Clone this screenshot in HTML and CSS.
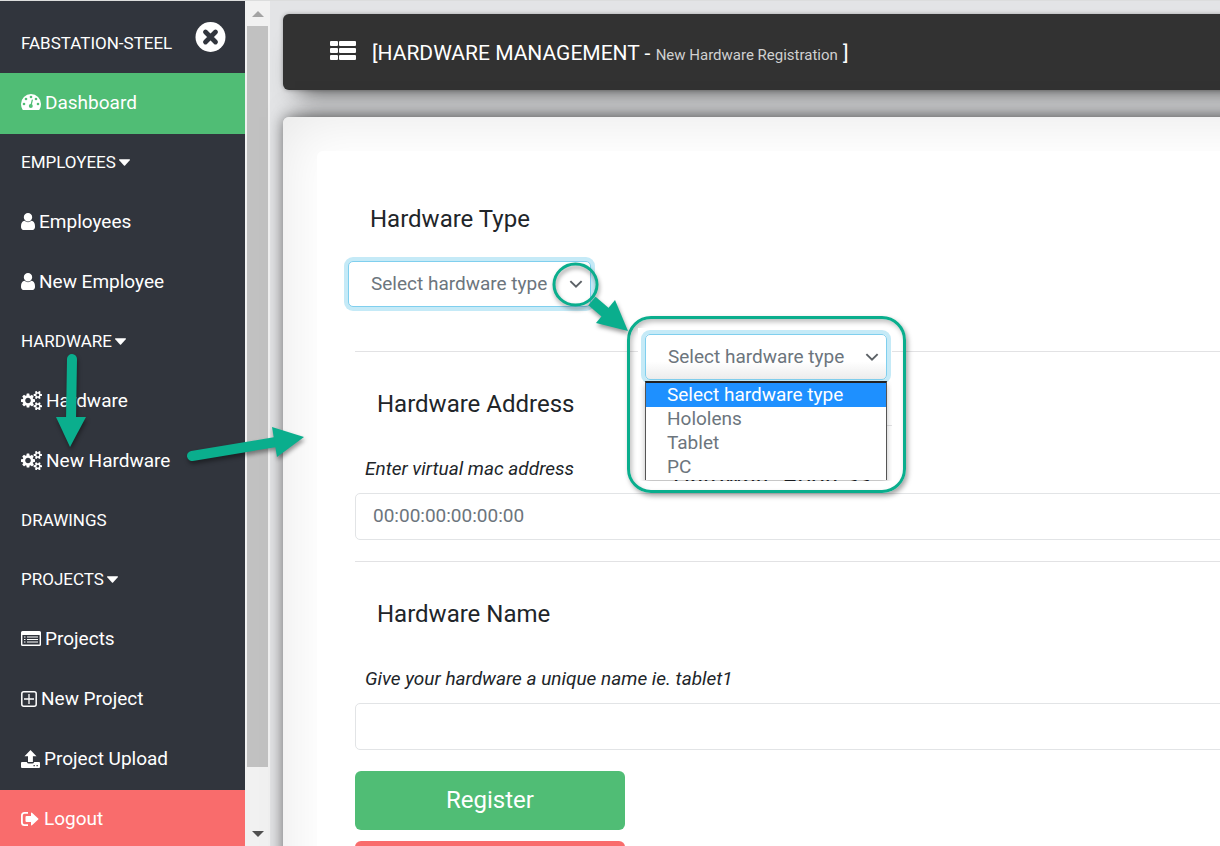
FILE: index.html
```html
<!DOCTYPE html>
<html lang="en">
<head>
  <meta charset="UTF-8">
  <title>Hardware Management</title>
  <link rel="stylesheet" href="styles.css">
</head>
<body>
  <svg class="sprite" width="0" height="0" aria-hidden="true">
    <symbol id="user" viewBox="256 128 1280 1536"><path d="M1536 1399q0 109-62.5 187t-150.5 78h-854q-88 0-150.5-78t-62.5-187q0-85 8.5-160.5t31.5-152 58.500-131 94-89 134.500-34.500q131 128 313 128t313-128q76 0 134.500 34.500t94 89 58.500 131 31.500 152 8.500 160.500zm-256-887q0 159-112.500 271.500t-271.500 112.500-271.500-112.500-112.500-271.500 112.500-271.500 271.500-112.500 271.500 112.500 112.500 271.500z"/></symbol>
    <symbol id="cogs" viewBox="0 40 1920 1700"><path d="M896 896q0-106-75-181t-181-75-181 75-75 181 75 181 181 75 181-75 75-181zm768 512q0-52-38-90t-90-38-90 38-38 90q0 53 37.500 90.500t90.500 37.500 90.500-37.500 37.500-90.500zm0-1024q0-52-38-90t-90-38-90 38-38 90q0 53 37.500 90.500t90.500 37.500 90.500-37.500 37.500-90.500zm-384 421v185q0 10-7 19.500t-16 10.500l-155 24q-11 35-32 76 34 48 90 115 7 11 7 20 0 12-7 19-23 30-82.500 89.500t-78.500 59.500q-11 0-21-7l-115-90q-37 19-77 31-11 108-23 155-7 24-30 24h-186q-11 0-20-7.500t-10-17.500l-23-153q-34-10-75-31l-118 89q-7 7-20 7-11 0-21-8-144-133-144-160 0-9 7-19 10-14 41-53t47-61q-23-44-35-82l-152-24q-10-1-17-9.500t-7-19.500v-185q0-10 7-19.500t16-10.500l155-24q11-35 32-76-34-48-90-115-7-11-7-20 0-12 7-20 22-30 82-89t79-59q11 0 21 7l115 90q34-18 77-32 11-108 23-154 7-24 30-24h186q11 0 20 7.500t10 17.500l23 153q34 10 75 31l118-89q8-7 20-7 11 0 21 8 144 133 144 160 0 8-7 19-12 16-42 54t-45 60q23 48 34 82l152 23q10 2 17 10.500t7 19.500zm640 533v140q0 16-149 31-12 27-30 52 51 113 51 138 0 4-4 7-122 71-124 71-8 0-46-47t-52-68q-20 2-30 2t-30-2q-14 21-52 68t-46 47q-2 0-124-71-4-3-4-7 0-25 51-138-18-25-30-52-149-15-149-31v-140q0-16 149-31 13-29 30-52-51-113-51-138 0-4 4-7 4-2 35-20t59-34 30-16q8 0 46 46.500t52 67.500q20-2 30-2t30 2q51-71 92-112l6-2q4 0 124 70 4 3 4 7 0 25-51 138 17 23 30 52 149 15 149 31zm0-1024v140q0 16-149 31-12 27-30 52 51 113 51 138 0 4-4 7-122 71-124 71-8 0-46-47t-52-68q-20 2-30 2t-30-2q-14 21-52 68t-46 47q-2 0-124-71-4-3-4-7 0-25 51-138-18-25-30-52-149-15-149-31v-140q0-16 149-31 13-29 30-52-51-113-51-138 0-4 4-7 4-2 35-20t59-34 30-16q8 0 46 46.500t52 67.500q20-2 30-2t30 2q51-71 92-112l6-2q4 0 124 70 4 3 4 7 0 25-51 138 17 23 30 52 149 15 149 31z"/></symbol>
    <symbol id="caret" viewBox="0 0 10 6"><path d="M0.500 0h9q0.800 0.300 0.300 1L5.500 5.700q-0.500 0.500-1 0L0.200 1q-0.500-0.700 0.300-1z"/></symbol>
    <symbol id="chevron" viewBox="0 0 12 8"><path d="M1 1l5 5 5-5" fill="none" stroke="#5c6166" stroke-width="1.700"/></symbol>
  </svg>

  <nav class="sidebar">
    <div class="brand">
      <span>FABSTATION-STEEL</span>
      <button class="close-btn" type="button" aria-label="Close menu">
        <svg width="31" height="31" viewBox="0 0 31 31"><circle cx="15.500" cy="15" r="15" fill="#fff"/><path d="M10.500 10l10 10M20.500 10l-10 10" stroke="#31353d" stroke-width="4.800" stroke-linecap="round"/></svg>
      </button>
    </div>
    <a class="link active" href="#">
      <svg width="20" height="16" viewBox="0 0 20 16"><path d="M10 0A10 10 0 0 0 0 10q0 3 1.500 5.400Q1.800 16 2.500 16h15q0.700 0 1-0.600Q20 13 20 10A10 10 0 0 0 10 0z"/><g fill="#50bd75"><circle cx="3" cy="10" r="1.300"/><circle cx="5" cy="5" r="1.300"/><circle cx="10" cy="3" r="1.300"/><circle cx="15" cy="5" r="1.300"/><circle cx="17" cy="10" r="1.300"/><circle cx="9.800" cy="12" r="2"/></g><path d="M10 11.500l1.300-5.500" stroke="#50bd75" stroke-width="1.200" stroke-linecap="round"/></svg>
      Dashboard
    </a>
    <a class="group" href="#">EMPLOYEES<svg width="11" height="7"><use href="#caret"/></svg></a>
    <a class="link" href="#"><svg width="14" height="17"><use href="#user"/></svg>Employees</a>
    <a class="link" href="#"><svg width="14" height="17"><use href="#user"/></svg>New Employee</a>
    <a class="group" href="#">HARDWARE<svg width="11" height="7"><use href="#caret"/></svg></a>
    <a class="link" href="#"><svg width="21" height="19"><use href="#cogs"/></svg>Hardware</a>
    <a class="link" href="#"><svg width="21" height="19"><use href="#cogs"/></svg>New Hardware</a>
    <a class="group" href="#">DRAWINGS</a>
    <a class="group" href="#">PROJECTS<svg width="11" height="7"><use href="#caret"/></svg></a>
    <a class="link" href="#">
      <svg width="20" height="15" viewBox="0 0 20 15"><path fill-rule="evenodd" d="M1.500 0h17Q20 0 20 1.500v12Q20 15 18.500 15h-17Q0 15 0 13.500v-12Q0 0 1.500 0zM1.400 4v9.600h17.200V4z"/><path d="M3 6h1.500M3 8.500h1.500M3 11h1.500M6 6h11M6 8.500h11M6 11h11" stroke="#fff" stroke-width="1.200"/></svg>
      Projects
    </a>
    <a class="link" href="#">
      <svg width="16" height="16" viewBox="0 0 16 16"><rect x="0.800" y="0.800" width="14.400" height="14.400" rx="2" fill="none" stroke="#fff" stroke-width="1.500"/><path d="M8 3v10M3 8h10" stroke="#fff" stroke-width="1.300"/></svg>
      New Project
    </a>
    <a class="link" href="#">
      <svg width="19" height="18" viewBox="0 0 19 18"><path d="M9.500 0l6 6.200h-3.600V12H7V6.200H3.500z"/><path fill-rule="evenodd" d="M1 12h4.800q0.500 1.600 2 1.600h3.400q1.500 0 2-1.600H18q1 0 1 1v4q0 1-1 1H1q-1 0-1-1v-4q0-1 1-1zM12.500 15v1.200h1.300V15zM15.500 15v1.200h1.300V15z"/></svg>
      Project Upload
    </a>
    <a class="link logout" href="#">
      <svg width="19" height="14" viewBox="0 0 19 14"><path d="M7 0.900H3.500Q0.900 0.900 0.900 3.500v7q0 2.600 2.600 2.600H7" fill="none" stroke="#fff" stroke-width="1.800"/><path d="M4.500 5q0-1 1-1H10V1.200q0-1.200 1-0.500l6.200 5.700q0.600 0.600 0 1.200L11 13.300q-1 0.700-1-0.500V10H5.500q-1 0-1-1z"/></svg>
      Logout
    </a>
  </nav>

  <div class="scrollbar" aria-hidden="true">
    <span class="arrow up"></span>
    <span class="thumb"></span>
    <span class="rest"></span>
    <span class="arrow down"></span>
  </div>

  <main class="main">
    <header class="title-bar">
      <svg width="26" height="19" viewBox="0 0 26 19"><path d="M1 0h6q1 0 1 1v3q0 1-1 1H1Q0 5 0 4V1q0-1 1-1zM10 0h15q1 0 1 1v3q0 1-1 1H10Q9 5 9 4V1q0-1 1-1zM1 7h6q1 0 1 1v3q0 1-1 1H1q-1 0-1-1V8q0-1 1-1zM10 7h15q1 0 1 1v3q0 1-1 1H10q-1 0-1-1V8q0-1 1-1zM1 14h6q1 0 1 1v3q0 1-1 1H1q-1 0-1-1v-3q0-1 1-1zM10 14h15q1 0 1 1v3q0 1-1 1H10q-1 0-1-1v-3q0-1 1-1z"/></svg>
      <h1>[HARDWARE MANAGEMENT - <small>New Hardware Registration</small> ]</h1>
    </header>

    <section class="card">
      <form class="form">
        <div class="type-field">
          <label class="heading" for="hardware-type">Hardware Type</label>
          <div class="select-box">
            <select id="hardware-type">
              <option>Select hardware type</option>
              <option>Hololens</option>
              <option>Tablet</option>
              <option>PC</option>
            </select>
            <svg width="14" height="9"><use href="#chevron"/></svg>
          </div>
        </div>
        <hr>
        <div class="field">
          <label class="heading" for="mac">Hardware Address</label>
          <p class="hint">Enter virtual mac address</p>
          <input id="mac" type="text" placeholder="00:00:00:00:00:00">
        </div>
        <hr>
        <div class="field">
          <label class="heading" for="name">Hardware Name</label>
          <p class="hint">Give your hardware a unique name ie. tablet1</p>
          <input id="name" type="text">
        </div>
        <button class="btn register" type="submit">Register</button>
        <button class="btn cancel" type="button" aria-label="Cancel"></button>
      </form>
    </section>
  </main>

  <!-- open state of the hardware type menu -->
  <div class="callout">
    <div class="snapshot">
      <div class="select-box">
        <select aria-label="Hardware type">
          <option>Select hardware type</option>
        </select>
        <svg width="14" height="9"><use href="#chevron"/></svg>
      </div>
      <ul class="menu">
        <li class="selected">Select hardware type</li>
        <li>Hololens</li>
        <li>Tablet</li>
        <li>PC</li>
      </ul>
      <hr>
      <div class="heading">Hardware Address</div>
    </div>
  </div>

  <svg class="marks" width="640" height="480" viewBox="0 0 640 480" aria-hidden="true">
    <g stroke="#0aae8d" stroke-width="10" stroke-linecap="round" fill="#0aae8d">
      <path d="M72 359L71 420"/>
      <path d="M192 456L276 442"/>
      <path d="M592 301L606 313" stroke-linecap="butt" stroke-width="11"/>
      <g stroke="none">
        <path d="M56 417h30l-16 30z"/>
        <path d="M272 427l32 10-27 20z"/>
        <path d="M615 300l13 31-32-8z"/>
      </g>
      <ellipse cx="575.500" cy="284.500" rx="21.500" ry="20.500" fill="none" stroke-width="3"/>
    </g>
  </svg>
</body>
</html>
```
FILE: styles.css
```css
* {
  box-sizing: border-box;
}
body {
  margin: 0;
  height: 100vh;
  display: flex;
  overflow: hidden;
  position: relative;
  border-top: 1px solid #dcdddd;
  background: #e3e4e6;
  color: #212529;
  font-family: Roboto, "Liberation Sans", sans-serif;
  font-size: 19px;
}
.sprite {
  position: absolute;
}

/* sidebar */
.sidebar {
  flex: 0 0 245px;
  background: #31353d;
  color: #fff;
  fill: #fff;
  overflow: hidden;
}
.brand {
  display: flex;
  justify-content: space-between;
  height: 72px;
  padding: 21px 19px 0 21px;
  font-size: 17px;
  line-height: 42px;
}
.close-btn {
  height: 31px;
  padding: 0;
  border: 0;
  background: none;
}
.close-btn svg {
  display: block;
}
.link, .group {
  display: flex;
  align-items: center;
  gap: 4px;
  height: 60px;
  padding: 0 21px 3px;
  color: #fff;
  text-decoration: none;
}
.group {
  gap: 3px;
  height: 59px;
  font-size: 17px;
}
.active {
  height: 61px;
  background: #50bd75;
}
.logout {
  background: #f96c6c;
}

.scrollbar {
  flex: 0 0 25px;
  display: flex;
  flex-direction: column;
  align-items: center;
  background: #f1f1f1;
}
.arrow {
  height: 25px;
  display: flex;
  align-items: center;
}
.arrow::before {
  content: "";
  border: 6px solid transparent;
}
.up::before {
  border-top: 0;
  border-bottom-color: #a3a3a3;
}
.down::before {
  border-bottom: 0;
  border-top-color: #505050;
}
.thumb {
  flex: 741;
  width: 21px;
  background: #c1c1c1;
}
.rest {
  flex: 54;
}

/* content runs past the right side of the window */
.main {
  flex: 1;
  display: flex;
  flex-direction: column;
  gap: 27px;
  margin-right: -120px;
  padding: 13px 0 0 13px;
}
.title-bar {
  display: flex;
  align-items: center;
  gap: 16px;
  flex: 0 0 76px;
  padding: 0 47px 3px;
  border-radius: 6px;
  background: #323232;
  color: #fff;
  fill: #fff;
  box-shadow: 0 0 4px rgba(0,0,0,0.3), 0 18px 24px -16px rgba(0,0,0,0.7);
}
.title-bar h1 {
  margin: 4px 0 0;
  font-size: 21px;
  font-weight: 400;
}
.title-bar small {
  font-size: 15px;
  color: #d0d0d0;
}
.card {
  flex: 1;
  padding: 34px;
  border-radius: 6px;
  background: #fff;
  box-shadow: 0 0 14px rgba(0,0,0,0.4), 0 -12px 24px -12px rgba(0,0,0,0.5), inset 0 0 60px #e6e6e6;
}
.form {
  padding: 46px 38px 0;
  border-radius: 6px;
  background: #fff;
}
.heading {
  display: block;
  padding-left: 22px;
  font-size: 24px;
  line-height: 44px;
}
.type-field {
  width: 243px;
  margin: 0 0 44px -7px;
}
.select-box {
  position: relative;
}
.select-box select {
  display: block;
  width: 100%;
  height: 46px;
  padding: 0 22px 2px;
  border: 1px solid #80cfee;
  border-radius: 5px;
  background: #fff;
  color: #6c757d;
  font: inherit;
  appearance: none;
  box-shadow: 0 0 0 4px #c5eaf7;
}
.type-field .select-box {
  margin-top: 20px;
}
.select-box svg {
  position: absolute;
  right: 8px;
  top: 19px;
}
hr {
  margin: 0;
  border: 0;
  border-top: 1px solid #e2e2e4;
}
.field {
  padding: 30px 0 21px;
}
.hint {
  margin: 28px 0 9px;
  padding-left: 10px;
  font-size: 19px;
  font-style: italic;
  line-height: 30px;
}
.field input {
  display: block;
  width: 100%;
  height: 47px;
  padding: 0 17px 2px;
  border: 1px solid #e2e4e6;
  border-radius: 5px;
  background: #fff;
  font: inherit;
}
.field input::placeholder {
  color: #6c757d;
}
.btn {
  display: block;
  width: 270px;
  height: 59px;
  margin-bottom: 11px;
  padding: 0 0 1px;
  border: 0;
  border-radius: 6px;
  color: #fff;
  font: inherit;
  font-size: 24px;
}
.register {
  background: #50bd75;
}
.cancel {
  background: #f96c6c;
}

/* callout and arrows float over the page */
.callout {
  position: absolute;
  left: 627px;
  top: 315px;
  width: 279px;
  height: 177px;
  padding: 9px 11px 8px 8px;
  border: 3px solid #0aae8d;
  border-radius: 24px;
  box-shadow: 2px 3px 5px rgba(0,0,0,0.35), inset 2px 3px 5px rgba(0,0,0,0.25);
}
.snapshot {
  position: relative;
  height: 153px;
  padding: 6px 5px 0 7px;
  overflow: hidden;
  background: #fff;
}
.snapshot .select-box select {
  background: linear-gradient(#fff 60%, #ececec);
}
.menu {
  position: absolute;
  left: 7px;
  right: 5px;
  top: 53px;
  z-index: 1;
  height: 99px;
  margin: 0;
  padding: 0;
  list-style: none;
  border: 1px solid #555;
  border-top: 2px solid #222;
  border-bottom: 0;
  background: #fff;
  color: #6c757d;
  line-height: 24px;
  box-shadow: 0 4px 6px rgba(0,0,0,0.25);
}
.menu li {
  padding-left: 21px;
}
.menu .selected {
  background: #1e90ff;
  color: #fff;
}
.snapshot hr {
  margin: 45px -5px 30px 0;
}
.snapshot .heading {
  padding-left: 28px;
}
.marks {
  position: absolute;
  left: 0;
  top: -1px;
  pointer-events: none;
  filter: drop-shadow(1px 3px 2px rgba(0,0,0,0.4));
}
```
